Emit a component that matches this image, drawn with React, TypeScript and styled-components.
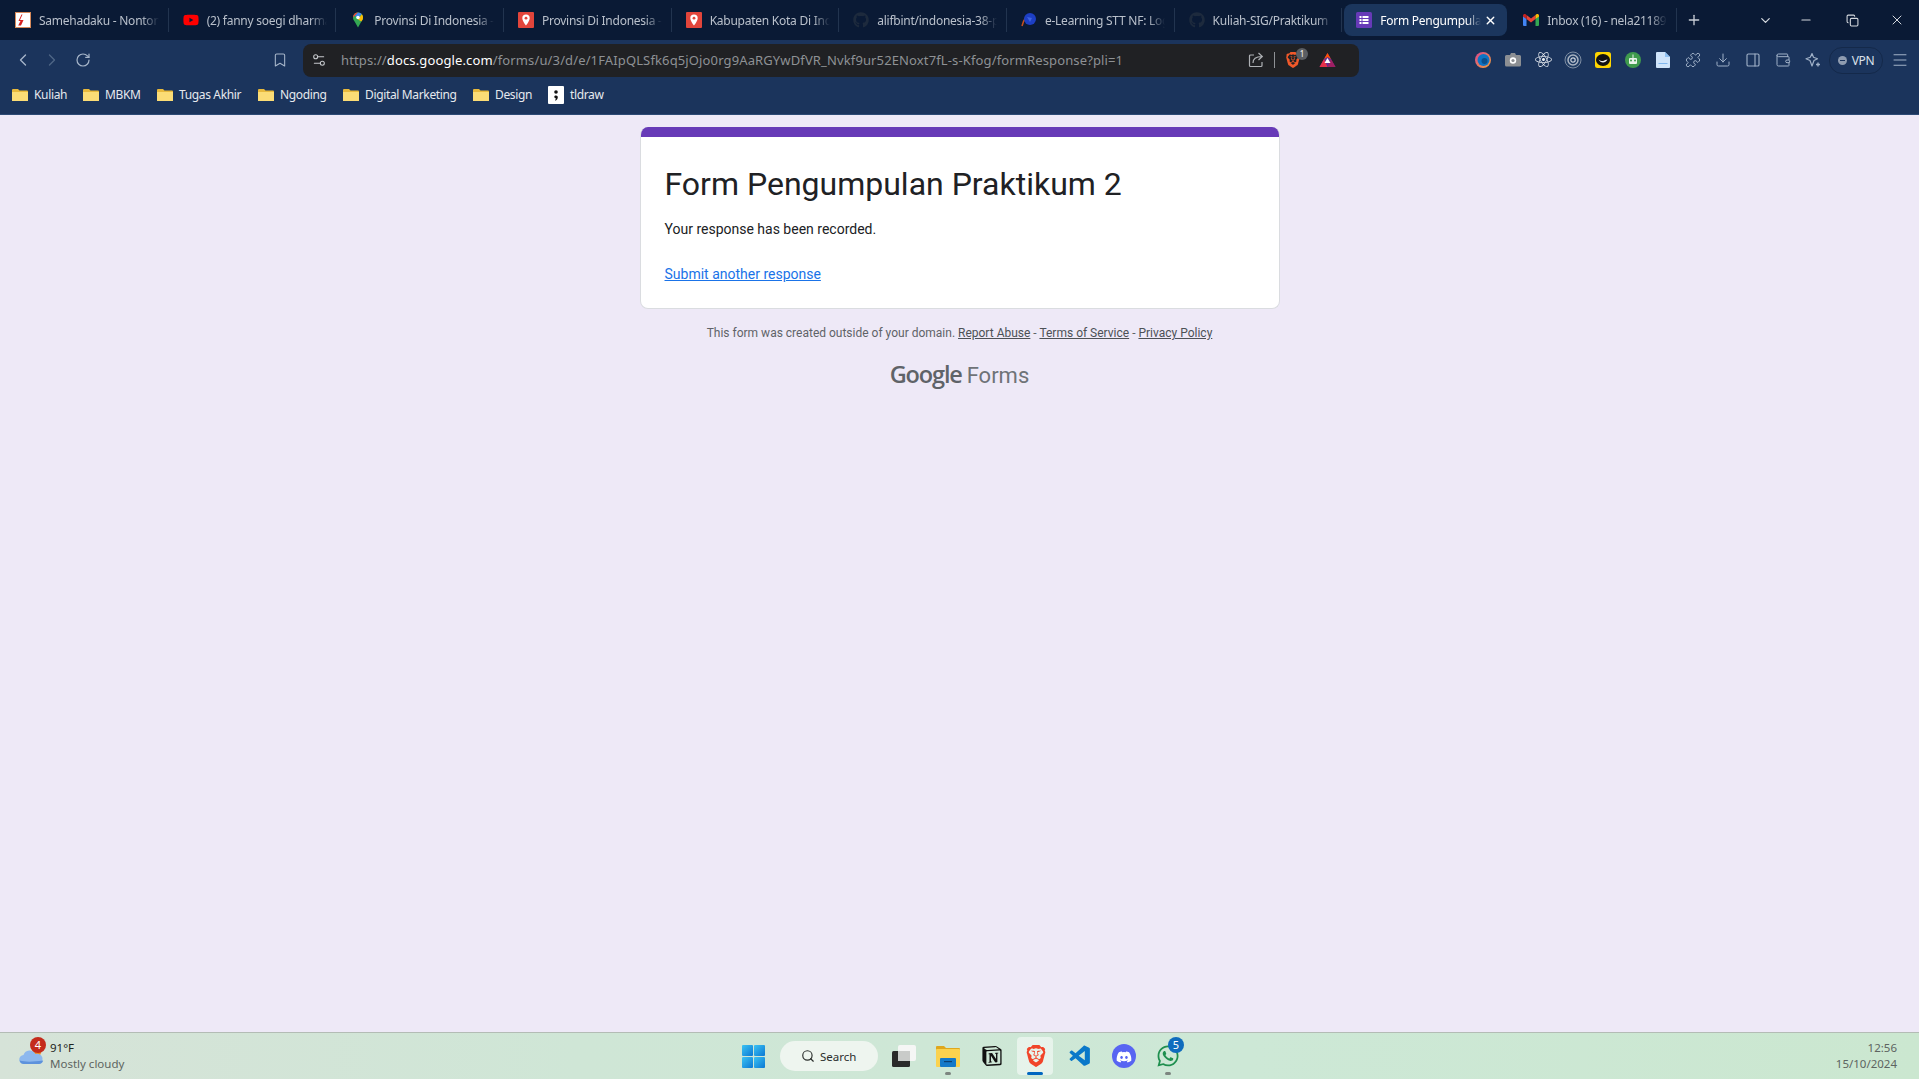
import React from "react";
import styled, { createGlobalStyle } from "styled-components";
import {
  ChevronDown, ChevronLeft, ChevronRight, Bookmark, Download, Menu, Minus, Plus, Puzzle,
  RotateCw, Search, Settings2, Wallet, X, Copy, PanelRight,
} from "lucide-react";
import { FaDiscord, FaGithub, FaReact, FaWhatsapp, FaYoutube } from "react-icons/fa";
import { SiNotion, SiBrave } from "react-icons/si";
import { VscVscode } from "react-icons/vsc";

const GlobalStyle = createGlobalStyle`
  html, body { margin: 0; padding: 0; height: 100%; overflow: hidden; }
  body { font-family: "Noto Sans", "Liberation Sans", sans-serif; }
`;

const Screen = styled.div`
  display: flex;
  flex-direction: column;
  height: 100vh;
  background: #eee9f7;
`;

const TabBar = styled.div`
  display: flex;
  align-items: center;
  height: 40px;
  padding-left: 1px;
  background: #0a1a35;
  flex-shrink: 0;
`;

const Tab = styled.div<{ $active?: boolean }>`
  position: relative;
  display: flex;
  align-items: center;
  box-sizing: border-box;
  width: ${(p) => (p.$active ? "163px" : "167.67px")};
  height: 32px;
  margin: ${(p) => (p.$active ? "0 2px 0 2px" : "0")};
  padding-left: ${(p) => (p.$active ? "12px" : "14px")};
  border-radius: 8px;
  flex-shrink: 0;
  background: ${(p) => (p.$active ? "#1b365d" : "transparent")};

  &::after {
    content: "";
    display: ${(p) => (p.$active ? "none" : "block")};
    position: absolute;
    right: 0;
    top: 4px;
    width: 1px;
    height: 24px;
    background: #22344f;
  }
`;

const TabIcon = styled.span`
  display: flex;
  align-items: center;
  justify-content: center;
  width: 16px;
  height: 16px;
  flex-shrink: 0;
`;

const TabTitle = styled.span<{ $active?: boolean; $w: number }>`
  margin-left: 8px;
  width: ${(p) => p.$w}px;
  overflow: hidden;
  white-space: nowrap;
  font-size: 12px;
  letter-spacing: -0.25px;
  color: ${(p) => (p.$active ? "#ffffff" : "#b9c0cb")};
  mask-image: linear-gradient(to right, #000 86%, transparent 100%);
`;

const TabClose = styled.span`
  display: flex;
  margin-left: 3px;
  color: #fff;
`;

const NewTab = styled.span`
  display: flex;
  margin-left: 9px;
  color: #c9ced6;
`;

const WindowControls = styled.div`
  display: flex;
  align-items: center;
  margin-left: auto;
  color: #d4d8de;
`;

const WinButton = styled.span<{ $w: number }>`
  display: flex;
  justify-content: center;
  width: ${(p) => p.$w}px;
`;

const NavRow = styled.div`
  display: flex;
  align-items: flex-start;
  box-sizing: border-box;
  height: 38px;
  padding: 4px 3px 0 8px;
  background: #1b345c;
  flex-shrink: 0;
`;

const NavButton = styled.span<{ $dim?: boolean; $w?: number; $ml?: number }>`
  display: flex;
  align-items: center;
  justify-content: center;
  box-sizing: border-box;
  width: ${(p) => p.$w ?? 29}px;
  height: 33px;
  padding-bottom: 2px;
  margin-left: ${(p) => p.$ml ?? 0}px;
  flex-shrink: 0;
  color: ${(p) => (p.$dim ? "#4f6686" : "#a7b6ca")};
`;

const Omnibox = styled.div`
  display: flex;
  align-items: center;
  box-sizing: border-box;
  width: 1056px;
  height: 33px;
  margin-left: 9px;
  padding: 0 23px 2px 8px;
  border-radius: 8px;
  background: #202124;
  flex-shrink: 0;
`;

const TuneIcon = styled.span`
  display: flex;
  color: #c5c8cc;
  margin-right: 14px;
`;

const Url = styled.span`
  flex: 1;
  font-family: "Noto Sans", sans-serif;
  font-size: 13px;
  white-space: nowrap;
  overflow: hidden;
  color: #8e9195;
  letter-spacing: 0.13px;
  b { font-weight: 400; color: #fff; }
`;

const OmniRight = styled.div`
  display: flex;
  align-items: center;
  color: #aeb1b5;
`;

const OmniDivider = styled.span`
  width: 1px;
  height: 16px;
  margin: 0 10px;
  background: #8e9195;
`;

const ShieldWrap = styled.span`
  position: relative;
  display: flex;
  margin-right: 18px;
`;

const ShieldBadge = styled.span`
  position: absolute;
  right: -7px;
  top: -4px;
  width: 12px;
  height: 12px;
  border-radius: 50%;
  background: #5b5e63;
  color: #fff;
  font-size: 8px;
  line-height: 12px;
  text-align: center;
`;

const ExtensionGroup = styled.div`
  display: flex;
  align-items: center;
  height: 33px;
  margin-left: 109px;
`;

const ExtSlot = styled.span`
  display: flex;
  align-items: center;
  justify-content: center;
  box-sizing: border-box;
  width: 30px;
  height: 33px;
  padding-bottom: 2px;
  color: #9fb0c7;
`;

const VpnPill = styled.span`
  display: flex;
  align-items: center;
  justify-content: center;
  box-sizing: border-box;
  gap: 5px;
  width: 54px;
  height: 27px;
  margin: 0 0 1px 1px;
  border: 1px solid #14294a;
  border-radius: 13px;
  color: #dbe1ea;
  font-size: 12px;
  letter-spacing: -0.3px;
`;

const VpnDot = styled.span`
  position: relative;
  width: 9px;
  height: 9px;
  border-radius: 50%;
  background: #8f9cb0;

  &::after {
    content: "";
    position: absolute;
    left: 2px;
    top: 4px;
    width: 5px;
    height: 1px;
    background: #1b345c;
  }
`;

const BookmarkBar = styled.div`
  display: flex;
  align-items: center;
  box-sizing: border-box;
  height: 37px;
  padding: 0 0 3px 12px;
  background: #1b345c;
  border-bottom: 1px solid #2d4a75;
  flex-shrink: 0;
`;

const BookmarkItem = styled.span<{ $w: number }>`
  display: flex;
  align-items: center;
  gap: 6px;
  width: ${(p) => p.$w}px;
  flex-shrink: 0;
  font-size: 12px;
  letter-spacing: -0.35px;
  white-space: nowrap;
  color: #e6e9ee;
`;

const Main = styled.main`
  flex: 1;
  display: flex;
  flex-direction: column;
  align-items: center;
  padding-top: 12px;
  font-family: Roboto, "Liberation Sans", sans-serif;
`;

const Card = styled.section`
  box-sizing: border-box;
  width: 640px;
  height: 182px;
  padding: 37px 24px 24px 24px;
  border: 1px solid #dadce0;
  border-top: 0;
  border-radius: 8px;
  background: #fff;
  position: relative;
  overflow: hidden;

  &::before {
    content: "";
    position: absolute;
    left: 0;
    top: 0;
    right: 0;
    height: 10px;
    background: #673ab7;
  }
`;

const Title = styled.h1`
  margin: 0;
  font-size: 32px;
  line-height: 40px;
  font-weight: 400;
  color: #202124;
`;

const Message = styled.p`
  margin: 15px 0 0;
  font-size: 14px;
  line-height: 20px;
  color: #202124;
`;

const AnotherLink = styled.a`
  display: block;
  margin-top: 25px;
  font-size: 14px;
  line-height: 20px;
  color: #1a73e8;
  text-decoration: underline;
`;

const Notice = styled.div`
  margin-top: 16px;
  font-size: 12px;
  line-height: 16px;
  color: #5f6368;

  a {
    color: #4d5156;
    text-decoration: underline;
  }
`;

const Wordmark = styled.div`
  display: flex;
  align-items: baseline;
  margin-top: 18px;
  height: 30px;
  color: #6f7377;
  font-size: 22px;
  line-height: 30px;
`;

const WordGoogle = styled.span`
  color: #5f6368;
  font-family: "Open Sans", sans-serif;
  font-weight: 600;
  font-size: 23.5px;
  letter-spacing: -1.15px;
  margin-right: 5px;
`;

const Taskbar = styled.footer`
  display: grid;
  grid-template-columns: 1fr auto 1fr;
  align-items: center;
  box-sizing: border-box;
  height: 47px;
  padding-left: 2px;
  border-top: 1px solid #b3bcb5;
  background: linear-gradient(to right, #d6e3d8 0%, #cfe6d6 30%, #cde8d6 65%, #cbe7d0 100%);
  font-family: "Noto Sans", sans-serif;
  flex-shrink: 0;
`;

const Weather = styled.div`
  display: flex;
  align-items: center;
  padding-left: 17px;
  height: 100%;
`;

const WeatherIcon = styled.span`
  position: relative;
  display: flex;
  width: 31px;
`;

const WeatherBadge = styled.span`
  position: absolute;
  left: 11px;
  top: -10px;
  width: 16px;
  height: 16px;
  border-radius: 50%;
  background: #c42b1c;
  color: #fff;
  font-size: 11px;
  line-height: 16px;
  text-align: center;
`;

const StackedText = styled.div<{ $right?: boolean }>`
  display: flex;
  flex-direction: column;
  gap: 2px;
  font-size: 11.5px;
  line-height: 14px;
  color: #1f2421;
  text-align: ${(p) => (p.$right ? "right" : "left")};
  ${(p) => (p.$right ? "justify-self: end; padding-right: 22px;" : "")}
`;

const Faint = styled.span`
  color: #5d6461;
`;

const Center = styled.div`
  display: flex;
  align-items: center;
  height: 100%;
`;

const TaskSlot = styled.span<{ $active?: boolean }>`
  position: relative;
  display: flex;
  align-items: center;
  justify-content: center;
  width: 44px;
  height: 38px;

  ${(p) =>
    p.$active
      ? `&::before {
          content: "";
          position: absolute;
          left: 3px;
          right: 5px;
          top: 0;
          bottom: 0;
          background: rgba(255, 255, 255, 0.5);
          border-radius: 4px;
        }`
      : ""}

  svg { position: relative; }
`;

const RunDot = styled.span<{ $active?: boolean }>`
  position: absolute;
  bottom: 0;
  left: 50%;
  width: ${(p) => (p.$active ? 16 : 6)}px;
  height: 3px;
  margin-left: ${(p) => (p.$active ? -9 : -3)}px;
  border-radius: 2px;
  background: ${(p) => (p.$active ? "#0067c0" : "#7d8580")};
`;

const SearchPill = styled.div`
  display: flex;
  align-items: center;
  box-sizing: border-box;
  width: 98px;
  height: 30px;
  margin: 0 4px 0 5px;
  padding-left: 21px;
  gap: 5px;
  border-radius: 15px;
  background: #eef5ef;
  color: #2b2f2d;
  font-size: 11.5px;
`;

const CountBadge = styled.span`
  position: absolute;
  right: 6px;
  top: 0;
  width: 16px;
  height: 16px;
  border-radius: 50%;
  background: #0f6cbd;
  color: #fff;
  font-size: 11px;
  line-height: 16px;
  text-align: center;
`;

const SamehadakuIcon = () => (
  <svg width="16" height="16" viewBox="0 0 16 16">
    <rect x="0.5" y="0.5" width="15" height="15" fill="#fff" stroke="#d88a5a" />
    <path d="M12.5 2.5H7.5L5 8h3.5L6 13.5H3.2L5.5 9H3.5L6.5 2.5" fill="#d6201f" />
  </svg>
);

const MapsPin = () => (
  <svg width="16" height="16" viewBox="0 0 16 16">
    <path d="M8 0.5C5 0.5 3 2.8 3 5.5c0 1.6.7 2.8 1.6 4L8 15.5l3.4-6c.9-1.2 1.6-2.4 1.6-4C13 2.8 11 .5 8 .5z" fill="#34a853" />
    <path d="M3 5.5C3 2.8 5 .5 8 .5l-3 3.2z" fill="#ea4335" />
    <path d="M8 .5c1.6 0 3 .7 3.8 1.8L8 5.5 5 3.7z" fill="#4285f4" />
    <path d="M13 5.5c0 1.6-.7 2.8-1.6 4L8 7.5l3.8-5.2c.8.8 1.2 2 1.2 3.2z" fill="#fbbc04" />
    <circle cx="8" cy="5.5" r="1.8" fill="#fff" />
  </svg>
);

const RedPin = () => (
  <svg width="16" height="16" viewBox="0 0 16 16">
    <rect width="16" height="16" rx="1" fill="#e2453b" />
    <path d="M8 2.5a3.7 3.7 0 0 0-3.7 3.7C4.3 9 8 13.5 8 13.5s3.7-4.5 3.7-7.3A3.7 3.7 0 0 0 8 2.5z" fill="#fff" />
    <circle cx="8" cy="6.2" r="1.4" fill="#e2453b" />
  </svg>
);

const ELearningIcon = () => (
  <svg width="16" height="16" viewBox="0 0 16 16">
    <path d="M1 14C2 10 3 8 5 5" stroke="#c8501e" strokeWidth="1.5" fill="none" />
    <circle cx="9" cy="7" r="6" fill="#1d3fc4" />
    <path d="M6 5l5 1-2 4z" fill="#3f63e0" />
  </svg>
);

const FormsIcon = () => (
  <svg width="16" height="16" viewBox="0 0 16 16">
    <rect width="16" height="16" rx="1.5" fill="#673ab7" />
    <g fill="#fff">
      <rect x="3.5" y="4" width="2" height="2" />
      <rect x="6.5" y="4" width="6" height="2" />
      <rect x="3.5" y="7" width="2" height="2" />
      <rect x="6.5" y="7" width="6" height="2" />
      <rect x="3.5" y="10" width="2" height="2" />
      <rect x="6.5" y="10" width="6" height="2" />
    </g>
  </svg>
);

const GmailIcon = () => (
  <svg width="16" height="16" viewBox="0 0 16 16">
    <path d="M0 3.5V13a1 1 0 0 0 1 1h2.5V7z" fill="#4285f4" />
    <path d="M16 3.5V13a1 1 0 0 1-1 1h-2.5V7z" fill="#34a853" />
    <path d="M12.5 3l-4.5 3.4L3.5 3v4L8 10.4 12.5 7z" fill="#ea4335" />
    <path d="M0 3.5C0 2 1.7 1.5 2.6 2.3L3.5 3v4L0 4.5z" fill="#c5221f" />
    <path d="M16 3.5C16 2 14.3 1.5 13.4 2.3L12.5 3v4L16 4.5z" fill="#fbbc04" />
  </svg>
);

const FolderIcon = () => (
  <svg width="16" height="14" viewBox="0 0 16 14">
    <path d="M1 1h5l1.5 1.5H15a1 1 0 0 1 1 1V13H1a1 1 0 0 1-1-1V2a1 1 0 0 1 1-1z" fill="#e8b93c" />
    <path d="M0 4h16v8.5a.5.5 0 0 1-.5.5H.5a.5.5 0 0 1-.5-.5z" fill="#fbdc76" />
  </svg>
);

const TldrawIcon = () => (
  <svg width="16" height="18" viewBox="0 0 16 18">
    <rect width="16" height="18" rx="1" fill="#fff" />
    <circle cx="8" cy="6" r="1.8" fill="#111" />
    <path d="M8 9.5c1.2 0 1.8.8 1.8 1.8 0 1.5-.9 2.8-2.2 3.4l-.5-.7c.5-.4.8-.9.9-1.4-1-.2-1.7-1-1.7-1.8 0-1 .7-1.3 1.7-1.3z" fill="#111" />
  </svg>
);

const ShareArrow = () => (
  <svg width="16" height="16" viewBox="0 0 16 16" fill="none" stroke="currentColor" strokeWidth="1.2">
    <path d="M6 3H2.5A1 1 0 0 0 1.5 4v9.5a1 1 0 0 0 1 1H13a1 1 0 0 0 1-1V10" />
    <path d="M5 11c0-4 2.5-6.5 9-6.5M10.500 1l3.800 3.500L10.500 8" />
  </svg>
);

const BatIcon = () => (
  <svg width="17" height="16" viewBox="0 0 17 16">
    <path d="M8.5 1L16.5 15H.5z" fill="#662d91" />
    <path d="M8.5 1L12 7 8.5 5 5 7z" fill="#ff5000" />
    <path d="M.5 15L5 7l3.5 8z" fill="#e6304a" />
    <path d="M16.5 15L12 7l-3.5 8z" fill="#9e1f63" />
    <path d="M8.5 6l3 5h-6z" fill="#fff" />
  </svg>
);

const RingIcon = () => (
  <svg width="18" height="18" viewBox="0 0 18 18">
    <circle cx="9" cy="9" r="8" fill="#1f3b63" stroke="#7f8ea3" strokeWidth="1" />
    <circle cx="9" cy="9" r="5" fill="none" stroke="#aab4c2" strokeWidth="1.5" />
    <circle cx="9" cy="9" r="2.2" fill="none" stroke="#c9d0da" strokeWidth="1.2" />
  </svg>
);

const OrbIcon = () => (
  <svg width="16" height="16" viewBox="0 0 16 16">
    <defs>
      <linearGradient id="orbRing" x1="0" y1="0" x2="1" y2="1">
        <stop offset="0" stopColor="#d8458f" />
        <stop offset="1" stopColor="#f2a33a" />
      </linearGradient>
    </defs>
    <circle cx="8" cy="8" r="8" fill="url(#orbRing)" />
    <circle cx="8.5" cy="8" r="6" fill="#0e74c4" />
    <circle cx="9.5" cy="9" r="3" fill="#0a4f8c" />
  </svg>
);

const CameraIcon = () => (
  <svg width="16" height="15" viewBox="0 0 16 15">
    <path d="M1.5 3H5l1-2h4l1 2h3.5A1.5 1.5 0 0 1 16 4.5V13a1.5 1.5 0 0 1-1.5 1.5h-13A1.5 1.5 0 0 1 0 13V4.5A1.5 1.5 0 0 1 1.5 3z" fill="#8c8f93" />
    <circle cx="8" cy="8.5" r="3.2" fill="#fff" />
    <circle cx="8" cy="8.5" r="1.6" fill="#8c8f93" />
  </svg>
);

const YellowExt = () => (
  <svg width="16" height="16" viewBox="0 0 16 16">
    <rect width="16" height="16" rx="2.5" fill="#ffd600" />
    <ellipse cx="8" cy="8" rx="7" ry="6" fill="#111" />
    <path d="M3.5 7.5c2 1.5 3.5 1.8 4.5 1.5s2.5-1.5 4.5-1.5c-1 2-2.800 3-4.500 3s-3.500-1-4.500-3z" fill="#eee" />
  </svg>
);

const RobotExt = () => (
  <svg width="16" height="16" viewBox="0 0 16 16">
    <circle cx="8" cy="8" r="8" fill="#3f9a4d" />
    <rect x="4" y="6" width="8" height="6" rx="1" fill="#e9f3ea" />
    <rect x="7.5" y="2.5" width="1" height="3.5" fill="#e9f3ea" />
    <circle cx="6" cy="8.5" r="1" fill="#3f9a4d" />
    <circle cx="10" cy="8.5" r="1" fill="#3f9a4d" />
  </svg>
);

const DocExt = () => (
  <svg width="14" height="16" viewBox="0 0 14 16">
    <path d="M1 0h8l5 5v10a1 1 0 0 1-1 1H1a1 1 0 0 1-1-1V1a1 1 0 0 1 1-1z" fill="#cfe4fb" />
    <path d="M9 0l5 5H9z" fill="#8fc1f3" />
    <rect x="2.5" y="11" width="9" height="1" fill="#7fb6ee" />
  </svg>
);

const LeoStar = () => (
  <svg width="16" height="16" viewBox="0 0 16 16" fill="none" stroke="currentColor" strokeWidth="1.2" strokeLinejoin="round">
    <path d="M7 1.5l1.5 3.800 4 1.500-3.500 1.700-2 5.500-2-5.500L1 6.800l4.300-1.500z" />
    <path d="M13 10.500v4M11 12.500h4" strokeWidth="1.4" />
  </svg>
);

const WeatherCloud = () => (
  <svg width="25" height="18" viewBox="0 0 25 18">
    <circle cx="18" cy="5" r="4" fill="#f08a24" />
    <path d="M5 17a4.5 4.5 0 0 1-.5-9 6.500 6.500 0 0 1 12-1 5 5 0 0 1 3.500 10z" fill="#8db8ee" />
    <path d="M5 17a4.5 4.5 0 0 1-4.400-3.500c6 1.500 12 1.500 23.600 0A5 5 0 0 1 20 17z" fill="#5d92dc" />
  </svg>
);

const StartIcon = () => (
  <svg width="23" height="23" viewBox="0 0 23 23">
    <defs>
      <linearGradient id="startBlue" x1="0" y1="0" x2="1" y2="1">
        <stop offset="0" stopColor="#3bc3f3" />
        <stop offset="1" stopColor="#0b78d4" />
      </linearGradient>
    </defs>
    <rect x="0" y="0" width="11" height="11" rx="1" fill="url(#startBlue)" />
    <rect x="12" y="0" width="11" height="11" rx="1" fill="url(#startBlue)" />
    <rect x="0" y="12" width="11" height="11" rx="1" fill="url(#startBlue)" />
    <rect x="12" y="12" width="11" height="11" rx="1" fill="url(#startBlue)" />
  </svg>
);

const TaskViewIcon = () => (
  <svg width="24" height="22" viewBox="0 0 24 22">
    <rect x="6" y="0" width="18" height="16" rx="2" fill="#f5f6f5" />
    <rect x="0" y="6" width="18" height="16" rx="1.5" fill="#2a2a2a" />
    <rect x="6" y="6" width="12" height="10" fill="#c9cbc9" />
  </svg>
);

const ExplorerIcon = () => (
  <svg width="24" height="22" viewBox="0 0 24 22">
    <path d="M0 2a1 1 0 0 1 1-1h7l2 2h13a1 1 0 0 1 1 1v2H0z" fill="#dfa71e" />
    <rect x="0" y="4" width="24" height="18" rx="1" fill="#fbd24e" />
    <rect x="4" y="13" width="16" height="9" rx="1" fill="#1479c9" />
    <rect x="8" y="16" width="8" height="1.2" fill="#0a3f73" />
  </svg>
);

const tabs = [
  { title: "Samehadaku - Nonton", icon: <SamehadakuIcon /> },
  { title: "(2) fanny soegi dharma", icon: <FaYoutube size={16} color="#ff0000" /> },
  { title: "Provinsi Di Indonesia -", icon: <MapsPin /> },
  { title: "Provinsi Di Indonesia -", icon: <RedPin /> },
  { title: "Kabupaten Kota Di Ind", icon: <RedPin /> },
  { title: "alifbint/indonesia-38-p", icon: <FaGithub size={16} color="#1d2a3d" /> },
  { title: "e-Learning STT NF: Log", icon: <ELearningIcon /> },
  { title: "Kuliah-SIG/Praktikum", icon: <FaGithub size={16} color="#1d2a3d" /> },
];

const bookmarks = [
  { label: "Kuliah", w: 71 },
  { label: "MBKM", w: 74 },
  { label: "Tugas Akhir", w: 101 },
  { label: "Ngoding", w: 85 },
  { label: "Digital Marketing", w: 130 },
  { label: "Design", w: 75 },
];

const App = () => (
  <Screen>
    <GlobalStyle />
    <TabBar>
      {tabs.map((tab, i) => (
        <Tab key={i}>
          <TabIcon>{tab.icon}</TabIcon>
          <TabTitle $w={120}>{tab.title}</TabTitle>
        </Tab>
      ))}
      <Tab $active>
        <TabIcon><FormsIcon /></TabIcon>
        <TabTitle $active $w={101}>Form Pengumpulan</TabTitle>
        <TabClose><X size={13} strokeWidth={2.5} /></TabClose>
      </Tab>
      <Tab>
        <TabIcon><GmailIcon /></TabIcon>
        <TabTitle $w={120}>Inbox (16) - nela21189</TabTitle>
      </Tab>
      <NewTab><Plus size={16} strokeWidth={2} /></NewTab>
      <WindowControls>
        <WinButton $w={36}><ChevronDown size={15} /></WinButton>
        <WinButton $w={46}><Minus size={14} /></WinButton>
        <WinButton $w={46}><Copy size={13} /></WinButton>
        <WinButton $w={44}><X size={16} strokeWidth={1.5} /></WinButton>
      </WindowControls>
    </TabBar>

    <NavRow>
      <NavButton><ChevronLeft size={20} strokeWidth={1.6} /></NavButton>
      <NavButton $dim><ChevronRight size={20} strokeWidth={1.6} /></NavButton>
      <NavButton $ml={2}><RotateCw size={16} strokeWidth={1.8} /></NavButton>
      <NavButton $w={28} $ml={169}><Bookmark size={16} strokeWidth={1.6} /></NavButton>
      <Omnibox>
        <TuneIcon><Settings2 size={16} strokeWidth={1.6} /></TuneIcon>
        <Url>
          https://<b>docs.google.com</b>/forms/u/3/d/e/1FAIpQLSfk6q5jOjo0rg9AaRGYwDfVR_Nvkf9ur52ENoxt7fL-s-Kfog/formResponse?pli=1
        </Url>
        <OmniRight>
          <ShareArrow />
          <OmniDivider />
          <ShieldWrap>
            <SiBrave size={16} color="#f1592a" />
            <ShieldBadge>1</ShieldBadge>
          </ShieldWrap>
          <BatIcon />
        </OmniRight>
      </Omnibox>
      <ExtensionGroup>
        <ExtSlot><OrbIcon /></ExtSlot>
        <ExtSlot><CameraIcon /></ExtSlot>
        <ExtSlot><FaReact size={17} color="#e7ebf1" /></ExtSlot>
        <ExtSlot><RingIcon /></ExtSlot>
        <ExtSlot><YellowExt /></ExtSlot>
        <ExtSlot><RobotExt /></ExtSlot>
        <ExtSlot><DocExt /></ExtSlot>
        <ExtSlot><Puzzle size={16} strokeWidth={1.5} /></ExtSlot>
        <ExtSlot><Download size={16} strokeWidth={1.5} /></ExtSlot>
        <ExtSlot><PanelRight size={16} strokeWidth={1.7} /></ExtSlot>
        <ExtSlot><Wallet size={16} strokeWidth={1.5} /></ExtSlot>
        <ExtSlot><LeoStar /></ExtSlot>
        <VpnPill><VpnDot />VPN</VpnPill>
        <NavButton $w={34}><Menu size={18} strokeWidth={1.3} /></NavButton>
      </ExtensionGroup>
    </NavRow>

    <BookmarkBar>
      {bookmarks.map((b) => (
        <BookmarkItem key={b.label} $w={b.w}>
          <FolderIcon />
          {b.label}
        </BookmarkItem>
      ))}
      <BookmarkItem $w={60}>
        <TldrawIcon />
        tldraw
      </BookmarkItem>
    </BookmarkBar>

    <Main>
      <Card>
        <Title>Form Pengumpulan Praktikum 2</Title>
        <Message>Your response has been recorded.</Message>
        <AnotherLink href="#">Submit another response</AnotherLink>
      </Card>
      <Notice>
        This form was created outside of your domain. <a href="#">Report Abuse</a> - <a href="#">Terms of Service</a> - <a href="#">Privacy Policy</a>
      </Notice>
      <Wordmark>
        <WordGoogle>Google</WordGoogle>
        Forms
      </Wordmark>
    </Main>

    <Taskbar>
      <Weather>
        <WeatherIcon>
          <WeatherCloud />
          <WeatherBadge>4</WeatherBadge>
        </WeatherIcon>
        <StackedText>
          <span>91°F</span>
          <Faint>Mostly cloudy</Faint>
        </StackedText>
      </Weather>
      <Center>
        <TaskSlot><StartIcon /></TaskSlot>
        <SearchPill><Search size={14} />Search</SearchPill>
        <TaskSlot><TaskViewIcon /></TaskSlot>
        <TaskSlot><ExplorerIcon /><RunDot /></TaskSlot>
        <TaskSlot><SiNotion size={20} color="#111" /></TaskSlot>
        <TaskSlot $active><SiBrave size={22} color="#f1452a" /><RunDot $active /></TaskSlot>
        <TaskSlot><VscVscode size={25} color="#0a78c9" /></TaskSlot>
        <TaskSlot>
          <svg width="24" height="24" viewBox="0 0 24 24">
            <circle cx="12" cy="12" r="12" fill="#5865f2" />
            <foreignObject x="4" y="4" width="16" height="16">
              <FaDiscord size={16} color="#fff" />
            </foreignObject>
          </svg>
        </TaskSlot>
        <TaskSlot>
          <FaWhatsapp size={24} color="#1f8f4f" />
          <CountBadge>5</CountBadge>
          <RunDot />
        </TaskSlot>
      </Center>
      <StackedText $right>
        <Faint>12:56</Faint>
        <Faint>15/10/2024</Faint>
      </StackedText>
    </Taskbar>
  </Screen>
);

export default App;
